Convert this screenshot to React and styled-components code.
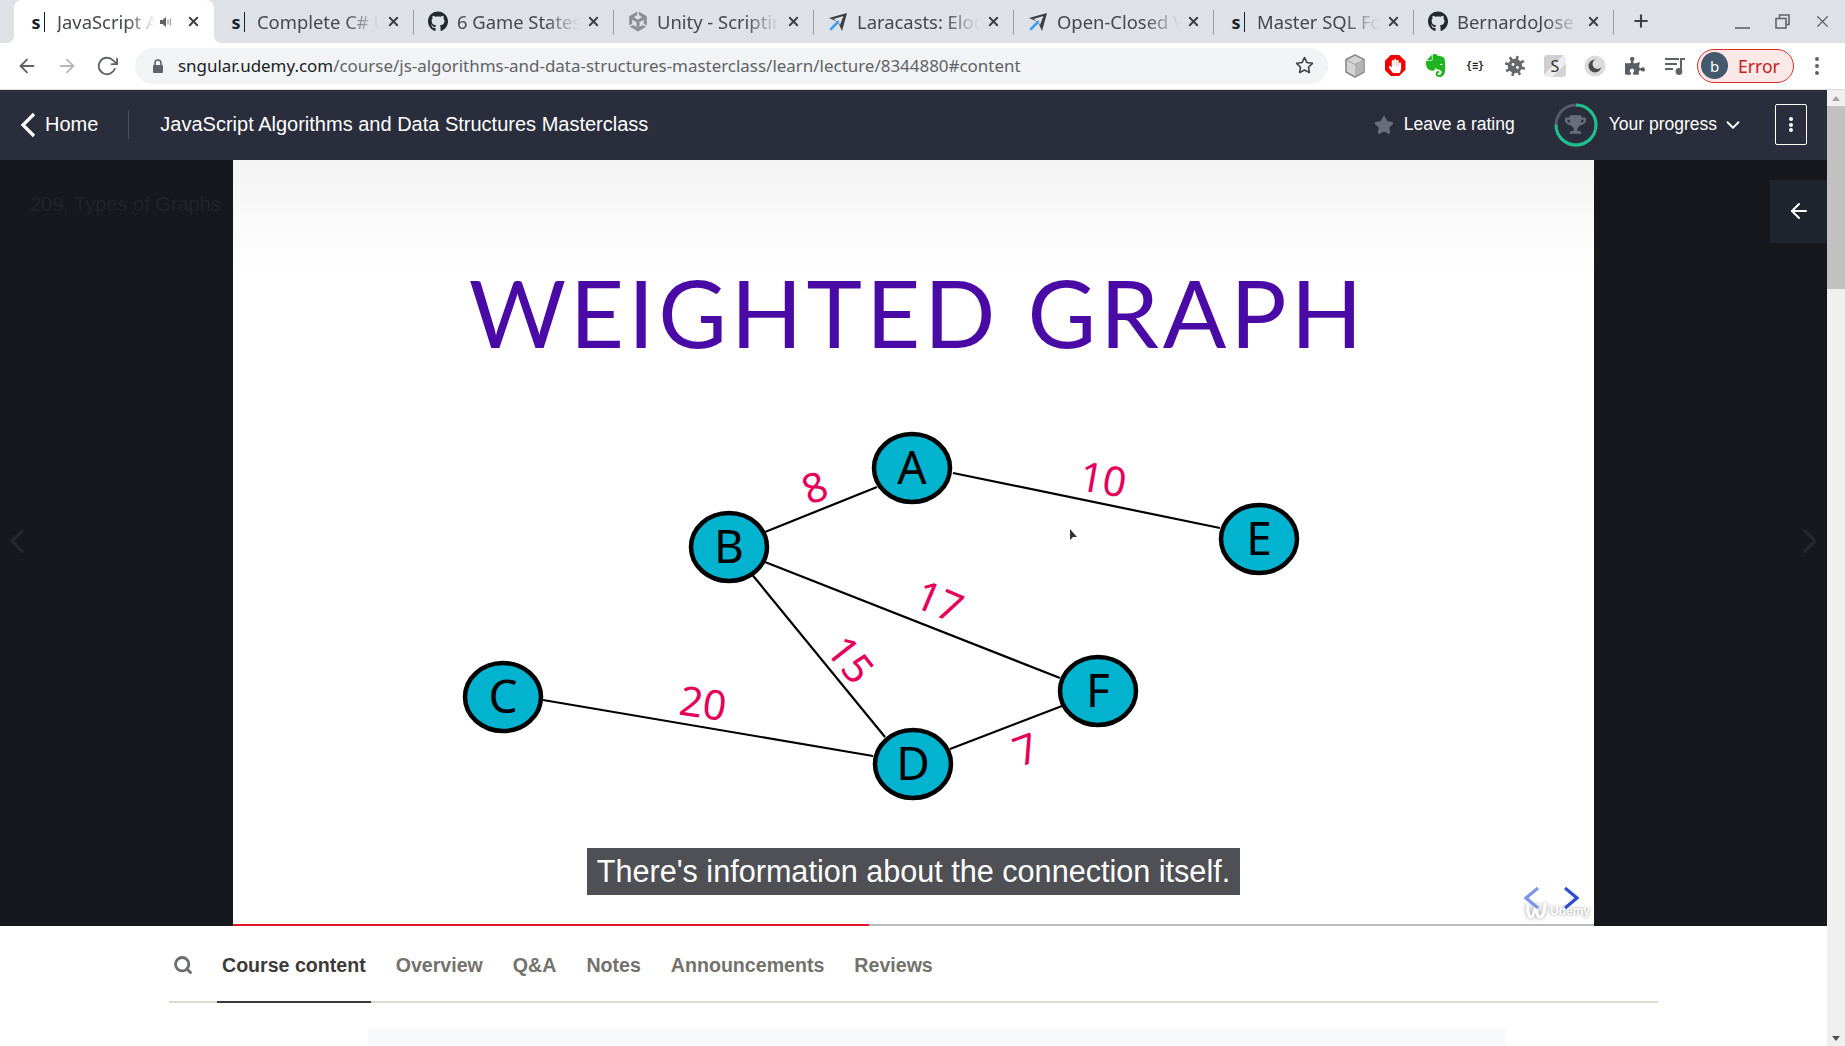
import React from "react";
import styled, { createGlobalStyle } from "styled-components";
import { FaGithub, FaStar, FaTrophy, FaPuzzlePiece, FaHandPaper } from "react-icons/fa";
import { SiUnity, SiEvernote } from "react-icons/si";
import { FiX, FiPlus, FiArrowLeft, FiArrowRight, FiRotateCw, FiStar, FiSearch, FiChevronDown, FiChevronLeft, FiChevronRight } from "react-icons/fi";

const GlobalStyle = createGlobalStyle`
  html, body {
    margin: 0;
    height: 100%;
    overflow: hidden;
    background: #fff;
  }
  #root {
    height: 100%;
  }
`;

const BROWSER_FONT = `"Noto Sans", "Open Sans", sans-serif`;
const PAGE_FONT = `"Liberation Sans", Arial, sans-serif`;

const Shell = styled.div`
  height: 1046px;
  display: flex;
  flex-direction: column;
  overflow: hidden;
`;

const TabStrip = styled.div`
  height: 43px;
  flex: none;
  display: flex;
  padding-left: 14px;
  background: #dee1e6;
  font-family: ${BROWSER_FONT};
`;

const Tab = styled.div`
  position: relative;
  width: 200px;
  flex: none;
  display: flex;
  align-items: center;
  padding: 0 13px 0 14px;
  box-sizing: border-box;
  color: #45484d;
  font-size: 18.4px;
  background: ${(p) => (p.$active ? "#fff" : "transparent")};
  border-radius: 8px 8px 0 0;
  ${(p) =>
    p.$active &&
    `
    &::before, &::after {
      content: "";
      position: absolute;
      bottom: 0;
      width: 8px;
      height: 8px;
    }
    &::before {
      left: -8px;
      background: radial-gradient(circle at 0 0, transparent 8px, #fff 8.5px);
    }
    &::after {
      right: -8px;
      background: radial-gradient(circle at 100% 0, transparent 8px, #fff 8.5px);
    }
  `}
  ${(p) =>
    p.$divider &&
    `
    &::after {
      content: "";
      position: absolute;
      right: 0;
      top: 10px;
      height: 25px;
      width: 1px;
      background: #9b9ea3;
    }
  `}
`;

const Favicon = styled.span`
  width: 20px;
  height: 20px;
  flex: none;
  display: flex;
  align-items: center;
  justify-content: center;
  margin-right: 9px;
  color: #24292e;
  font-size: 21px;
`;

const UdemyMark = styled.span`
  display: flex;
  align-items: center;
  font-size: 18px;
  line-height: 20px;
  font-weight: 700;
  color: #14202c;
  &::after {
    content: "";
    width: 1px;
    height: 20px;
    margin-left: 3px;
    background: #14202c;
  }
`;

const TabTitle = styled.span`
  flex: 1;
  min-width: 0;
  white-space: nowrap;
  overflow: hidden;
  -webkit-mask-image: linear-gradient(to right, #000 72%, transparent 100%);
  mask-image: linear-gradient(to right, #000 72%, transparent 100%);
`;

const TabAudio = styled.svg`
  width: 14px;
  height: 14px;
  flex: none;
  margin: 0 6px 0 4px;
`;

const TabClose = styled(FiX)`
  width: 15px;
  height: 15px;
  flex: none;
  stroke-width: 3;
  color: #3c4043;
  margin-left: 7px;
`;

const NewTab = styled(FiPlus)`
  width: 20px;
  height: 20px;
  margin: 11px 0 0 17px;
  stroke-width: 2.5;
  color: #3c4043;
`;

const WindowControls = styled.div`
  margin-left: auto;
  display: flex;
  align-items: center;
  gap: 21px;
  padding-right: 13px;
  color: #5f6368;
  svg {
    width: 19px;
    height: 19px;
    stroke-width: 1.6;
  }
`;

const Toolbar = styled.div`
  height: 47px;
  flex: none;
  display: flex;
  align-items: center;
  padding: 0 0 1px 16px;
  box-sizing: border-box;
  background: #fff;
  border-bottom: 1px solid #dadce0;
  color: #5f6368;
`;

const NavButton = styled.span`
  width: 22px;
  height: 22px;
  flex: none;
  margin-right: 18px;
  color: ${(p) => (p.$off ? "#b6b8bb" : "#5f6368")};
  svg {
    width: 22px;
    height: 22px;
    display: block;
    stroke-width: 2;
  }
`;

const UrlPill = styled.div`
  width: 1193px;
  height: 36px;
  flex: none;
  margin-left: -1px;
  display: flex;
  align-items: center;
  padding: 0 14px 0 17px;
  box-sizing: border-box;
  border-radius: 18px;
  background: #f1f3f4;
  font-family: ${BROWSER_FONT};
  font-size: 16.95px;
  color: #5f6368;
  svg.lock {
    width: 12px;
    height: 14px;
    margin-right: 14px;
    flex: none;
  }
`;

const UrlHost = styled.span`
  color: #202124;
`;

const UrlStar = styled(FiStar)`
  width: 19px;
  height: 19px;
  margin-left: auto;
  color: #3c4043;
  stroke-width: 2;
`;

const Extensions = styled.div`
  display: flex;
  align-items: center;
  margin-left: 7px;
`;

const ExtSlot = styled.span`
  width: 40px;
  height: 24px;
  flex: none;
  display: flex;
  align-items: center;
  justify-content: center;
  font-family: ${BROWSER_FONT};
`;

const StopBadge = styled.span`
  width: 21px;
  height: 21px;
  display: flex;
  align-items: center;
  justify-content: center;
  background: #f00000;
  color: #fff;
  font-size: 14px;
  clip-path: polygon(30% 0, 70% 0, 100% 30%, 100% 70%, 70% 100%, 30% 100%, 0 70%, 0 30%);
`;

const BraceText = styled.span`
  font-family: "DejaVu Sans Mono", monospace;
  font-size: 10px;
  font-weight: 700;
  color: #222;
`;

const SBadge = styled.span`
  width: 22px;
  height: 22px;
  border-radius: 3px;
  display: flex;
  align-items: center;
  justify-content: center;
  background: linear-gradient(135deg, #cfcfcf 0 45%, #ededed 45% 70%, #d4d4d4 70%);
  font-size: 16px;
  color: #333;
`;

const ProfilePill = styled.div`
  width: 97px;
  height: 34px;
  margin-left: 2px;
  flex: none;
  display: flex;
  align-items: center;
  padding-left: 3px;
  box-sizing: border-box;
  border: 1px solid #d93025;
  border-radius: 17px;
  background: #fce8e6;
  font-family: ${BROWSER_FONT};
  font-size: 17.6px;
  color: #c5221f;
`;

const Avatar = styled.span`
  width: 27px;
  height: 27px;
  border-radius: 50%;
  margin-right: 10px;
  display: flex;
  align-items: center;
  justify-content: center;
  background: #44596b;
  color: #fff;
  font-size: 15px;
`;

const KebabDots = styled.span`
  width: 4px;
  height: 4px;
  margin-left: 21px;
  border-radius: 50%;
  background: #5f6368;
  box-shadow: 0 -7px 0 #5f6368, 0 7px 0 #5f6368;
`;

const Viewport = styled.div`
  flex: 1;
  min-height: 0;
  display: flex;
`;

const Page = styled.div`
  flex: 1;
  min-width: 0;
  display: flex;
  flex-direction: column;
  font-family: ${PAGE_FONT};
`;

const HeaderBar = styled.header`
  height: 70px;
  flex: none;
  display: flex;
  align-items: center;
  padding: 0 20px 1px 20px;
  box-sizing: border-box;
  background: #2a2d3b;
  color: #fff;
  font-size: 20px;
`;

const HomeLink = styled.a`
  display: flex;
  align-items: center;
  gap: 9px;
  padding-right: 30px;
  margin-right: 31px;
  height: 29px;
  border-right: 1px solid #4c4f5b;
`;

const HeaderAction = styled.div`
  display: flex;
  align-items: center;
  font-size: 17.5px;
  margin-left: ${(p) => p.$offset || "0"};
`;

const RatingStar = styled(FaStar)`
  width: 20px;
  height: 20px;
  margin-right: 10px;
  color: #686f7a;
`;

const ProgressRing = styled.span`
  position: relative;
  width: 44px;
  height: 44px;
  margin-right: 11px;
  display: flex;
  align-items: center;
  justify-content: center;
  color: #686f7a;
  svg.ring {
    position: absolute;
    inset: 0;
  }
`;

const ProgressCaret = styled(FiChevronDown)`
  width: 22px;
  height: 22px;
  margin-left: 5px;
`;

const MenuButton = styled.button`
  width: 32px;
  height: 41px;
  margin-left: 31px;
  padding: 0;
  display: flex;
  flex-direction: column;
  align-items: center;
  justify-content: center;
  gap: 1.5px;
  border: 1px solid #fff;
  border-radius: 2px;
  background: transparent;
  span {
    width: 4px;
    height: 4px;
    border-radius: 50%;
    background: #fff;
  }
`;

const Player = styled.section`
  position: relative;
  height: 766px;
  flex: none;
  display: flex;
  justify-content: center;
  background: #16181d;
`;

const LectureTitle = styled.div`
  position: absolute;
  left: 30px;
  top: 33px;
  font-size: 20px;
  color: #222329;
`;

const SideChevron = styled.span`
  position: absolute;
  top: 361px;
  ${(p) => (p.$right ? "right: -3px;" : "left: -3px;")}
  color: #26282e;
  svg {
    width: 40px;
    height: 40px;
    display: block;
  }
`;

const SidebarToggle = styled.button`
  position: absolute;
  right: 0;
  top: 20px;
  width: 57px;
  height: 63px;
  padding: 0 0 2px;
  display: flex;
  align-items: center;
  justify-content: center;
  border: 0;
  background: #20242e;
  color: #fff;
  svg {
    width: 24px;
    height: 24px;
  }
`;

const Slide = styled.div`
  position: relative;
  width: 1361px;
  display: flex;
  flex-direction: column;
  background: linear-gradient(#f3f3f4, #fff 110px);
  overflow: hidden;
`;

const SlideTitle = styled.h1`
  height: 260px;
  margin: 0;
  box-sizing: border-box;
  padding: 87px 0 0 8px;
  text-align: center;
  font-family: Lato, "Open Sans", sans-serif;
  font-weight: 400;
  font-size: 94px;
  letter-spacing: 3.9px;
  line-height: 130px;
  color: #4a0aa5;
  white-space: nowrap;
`;

const GraphCanvas = styled.svg`
  width: 1361px;
  height: 500px;
  flex: none;
  display: block;
  font-family: "Noto Sans", "Open Sans", sans-serif;
`;

const Caption = styled.div`
  position: absolute;
  left: 354px;
  top: 688px;
  width: 653px;
  height: 47px;
  display: flex;
  align-items: center;
  justify-content: center;
  background: #4f5055;
  color: #fff;
  font-size: 30.6px;
  white-space: nowrap;
`;

const SlideArrows = styled.div`
  position: absolute;
  right: 15px;
  bottom: 17px;
  display: flex;
  gap: 25px;
`;

const Watermark = styled.div`
  position: absolute;
  right: 4px;
  bottom: 6px;
  display: flex;
  align-items: center;
  gap: 2px;
  font-size: 12px;
  font-weight: 700;
  color: #fff;
  text-shadow: 0 0 3px #888;
  svg {
    filter: drop-shadow(0 0 2px #999);
  }
`;

const ProgressTrack = styled.div`
  position: absolute;
  left: 0;
  right: 0;
  bottom: 0;
  height: 2px;
  background: #bcbcbc;
`;

const ProgressFill = styled.div`
  height: 100%;
  background: #e0142a;
`;

const TabsBar = styled.nav`
  height: 77px;
  width: 1489px;
  flex: none;
  margin-left: 169px;
  padding-top: 3px;
  display: flex;
  align-items: stretch;
  box-sizing: border-box;
  border-bottom: 2px solid #dcdacb;
`;

const SearchButton = styled.span`
  width: 48px;
  flex: none;
  display: flex;
  align-items: center;
  padding-left: 4px;
  box-sizing: border-box;
  color: #6a6f73;
  svg {
    width: 20px;
    height: 20px;
    stroke-width: 3.4;
  }
`;

const LearnTab = styled.a`
  display: flex;
  align-items: center;
  padding: 0 5px;
  margin: 0 20px -2px 0;
  font-size: 19.6px;
  font-weight: 700;
  color: ${(p) => (p.$active ? "#3c3b37" : "#73726c")};
  border-bottom: 2px solid ${(p) => (p.$active ? "#3c3b37" : "transparent")};
`;

const ContentBox = styled.div`
  flex: 1;
  width: 1137px;
  margin: 25px 0 0 368px;
  background: #f7f8fa;
`;

const Scrollbar = styled.div`
  width: 18px;
  flex: none;
  display: flex;
  flex-direction: column;
  align-items: center;
  background: #f0f0f0;
`;

const ScrollArrow = styled.span`
  height: 16px;
  flex: none;
  display: flex;
  align-items: center;
  justify-content: center;
  margin-top: ${(p) => (p.$down ? "auto" : "0")};
  &::before {
    content: "";
    border-left: 4.5px solid transparent;
    border-right: 4.5px solid transparent;
    ${(p) =>
      p.$down
        ? "border-top: 5px solid #505050;"
        : "border-bottom: 5px solid #a3a3a3;"}
  }
`;

const ScrollThumb = styled.div`
  width: 100%;
  height: 183px;
  background: #c1c1c1;
`;

const PlaneIcon = () => (
  <svg width="20" height="20" viewBox="0 0 20 20">
    <path d="M1 6 L19 1 L14 19 L10 10 Z" fill="#3a3d42" />
    <path d="M5.5 7 L15.5 4 L12 13 L10 10 Z" fill="#fff" opacity="0.85" />
    <path d="M10 10 L3 17" stroke="#3ca0f0" strokeWidth="2.6" strokeLinecap="round" />
  </svg>
);

const CubeIcon = () => (
  <svg width="22" height="24" viewBox="0 0 22 24">
    <path d="M11 1 L20 5.5 V18 L11 23 L2 18 V5.5 Z" fill="#d4d4d4" stroke="#8a8a8a" strokeWidth="1.6" />
    <path d="M11 10.5 L19.5 6 V17.5 L11 22.5 Z" fill="#b4b4b4" />
    <path d="M2.5 6 L11 10.5 L19.5 6" fill="none" stroke="#a0a0a0" strokeWidth="1" />
  </svg>
);

const GearBugIcon = () => (
  <svg width="22" height="22" viewBox="0 0 22 22">
    <circle cx="11" cy="11" r="7.2" fill="#66686c" />
    {[0, 45, 90, 135, 180, 225, 270, 315].map((a) => (
      <rect key={a} x="9.7" y="0.8" width="2.6" height="5" fill="#66686c" transform={`rotate(${a + 15} 11 11)`} />
    ))}
    <circle cx="9" cy="9.5" r="1.4" fill="#fff" />
    <circle cx="13.5" cy="12.5" r="1.4" fill="#fff" />
  </svg>
);

const MoonIcon = () => (
  <svg width="22" height="22" viewBox="0 0 22 22">
    <circle cx="11" cy="11" r="10.5" fill="#dcdcdc" />
    <circle cx="11" cy="11" r="6.5" fill="#4a4a4a" />
    <circle cx="13.5" cy="9" r="5" fill="#dcdcdc" />
  </svg>
);

const MediaIcon = () => (
  <svg width="22" height="20" viewBox="0 0 22 20" fill="none" stroke="#5f6368" strokeWidth="2">
    <path d="M1 3 H15 M1 8 H13 M1 13 H9" />
    <path d="M17 15 V3 H21" />
    <circle cx="15" cy="15.5" r="2.4" fill="#5f6368" />
  </svg>
);

const AudioGlyph = () => (
  <TabAudio viewBox="0 0 14 14">
    <path d="M1 5 H3.5 L7 2 V12 L3.5 9 H1 Z" fill="#5f6368" />
    <path d="M9 4.5 V9.5 M11.5 3.5 V10.5" stroke="#9a9da1" strokeWidth="1.2" />
  </TabAudio>
);

const SlideChevron = ({ dir, color }) => (
  <svg width="15" height="22" viewBox="0 0 15 22" fill="none" stroke={color} strokeWidth="3.2">
    <path d={dir === "left" ? "M14 1 L2 11 L14 21" : "M1 1 L13 11 L1 21"} />
  </svg>
);

const tabs = [
  { title: "JavaScript A", icon: <UdemyMark>s</UdemyMark>, active: true, audio: true },
  { title: "Complete C# U", icon: <UdemyMark>s</UdemyMark>, divider: true },
  { title: "6 Game States", icon: <FaGithub />, divider: true },
  { title: "Unity - Scriptin", icon: <SiUnity color="#8d8f92" />, divider: true },
  { title: "Laracasts: Eloc", icon: <PlaneIcon />, divider: true },
  { title: "Open-Closed V", icon: <PlaneIcon />, divider: true },
  { title: "Master SQL Fo", icon: <UdemyMark>s</UdemyMark>, divider: true },
  { title: "BernardoJose", icon: <FaGithub />, divider: true },
];

const nodes = [
  { id: "A", x: 912, y: 468 },
  { id: "B", x: 729, y: 547 },
  { id: "C", x: 503, y: 697 },
  { id: "D", x: 913, y: 764 },
  { id: "E", x: 1259, y: 539 },
  { id: "F", x: 1098, y: 691 },
];

const edges = [
  [877, 487, 765, 532],
  [765, 562, 1060, 678],
  [750, 572, 885, 737],
  [543, 700, 873, 756],
  [953, 473, 1220, 528],
  [950, 749, 1062, 706],
];

const weights = [
  { text: "8", x: 815, y: 488, r: -22 },
  { text: "10", x: 1103, y: 480, r: 10 },
  { text: "17", x: 939, y: 602, r: 23 },
  { text: "15", x: 850, y: 660, r: 52 },
  { text: "20", x: 703, y: 704, r: 8 },
  { text: "7", x: 1026, y: 750, r: -20 },
];

const learnTabs = ["Course content", "Overview", "Q&A", "Notes", "Announcements", "Reviews"];

const App = () => {
  return (
    <Shell>
      <GlobalStyle />
      <TabStrip>
        {tabs.map((tab) => (
          <Tab key={tab.title} $active={tab.active} $divider={tab.divider}>
            <Favicon>{tab.icon}</Favicon>
            <TabTitle>{tab.title}</TabTitle>
            {tab.audio && <AudioGlyph />}
            <TabClose />
          </Tab>
        ))}
        <NewTab />
        <WindowControls>
          <svg viewBox="0 0 19 19" fill="none" stroke="currentColor" strokeWidth="2">
            <path d="M2 16 H17" />
          </svg>
          <svg viewBox="0 0 19 19" fill="none" stroke="currentColor">
            <path d="M3 6.5 H13 V16 H3 Z M6.5 6 V3 H16 V12.5 H13.5" />
          </svg>
          <FiX />
        </WindowControls>
      </TabStrip>
      <Toolbar>
        <NavButton>
          <FiArrowLeft />
        </NavButton>
        <NavButton $off>
          <FiArrowRight />
        </NavButton>
        <NavButton>
          <FiRotateCw />
        </NavButton>
        <UrlPill>
          <svg className="lock" viewBox="0 0 12 14">
            <path d="M3 6 V4 a3 3 0 0 1 6 0 V6" fill="none" stroke="#5f6368" strokeWidth="1.6" />
            <rect x="1" y="6" width="10" height="8" rx="1" fill="#5f6368" />
          </svg>
          <UrlHost>sngular.udemy.com</UrlHost>
          /course/js-algorithms-and-data-structures-masterclass/learn/lecture/8344880#content
          <UrlStar />
        </UrlPill>
        <Extensions>
          <ExtSlot>
            <CubeIcon />
          </ExtSlot>
          <ExtSlot>
            <StopBadge>
              <FaHandPaper />
            </StopBadge>
          </ExtSlot>
          <ExtSlot>
            <SiEvernote size={23} color="#1fb320" />
          </ExtSlot>
          <ExtSlot>
            <BraceText>{"{≡}"}</BraceText>
          </ExtSlot>
          <ExtSlot>
            <GearBugIcon />
          </ExtSlot>
          <ExtSlot>
            <SBadge>S</SBadge>
          </ExtSlot>
          <ExtSlot>
            <MoonIcon />
          </ExtSlot>
          <ExtSlot>
            <FaPuzzlePiece size={20} color="#5a5e66" />
          </ExtSlot>
          <ExtSlot>
            <MediaIcon />
          </ExtSlot>
        </Extensions>
        <ProfilePill>
          <Avatar>b</Avatar>
          Error
        </ProfilePill>
        <KebabDots />
      </Toolbar>
      <Viewport>
        <Page>
          <HeaderBar>
            <HomeLink>
              <svg width="16" height="26" viewBox="0 0 16 26" fill="none" stroke="#fff" strokeWidth="3.2">
                <path d="M14 2 L3 13 L14 24" />
              </svg>
              Home
            </HomeLink>
            JavaScript Algorithms and Data Structures Masterclass
            <HeaderAction $offset="auto">
              <RatingStar />
              Leave a rating
            </HeaderAction>
            <HeaderAction $offset="39px">
              <ProgressRing>
                <svg className="ring" width="44" height="44" viewBox="0 0 44 44" fill="none" strokeWidth="3">
                  <circle cx="22" cy="22" r="20" stroke="#565a68" />
                  <circle
                    cx="22"
                    cy="22"
                    r="20"
                    stroke="#1cc08a"
                    strokeDasharray="94 126"
                    transform="rotate(-90 22 22)"
                  />
                </svg>
                <FaTrophy size={21} />
              </ProgressRing>
              Your progress
              <ProgressCaret />
            </HeaderAction>
            <MenuButton>
              <span />
              <span />
              <span />
            </MenuButton>
          </HeaderBar>
          <Player>
            <LectureTitle>209. Types of Graphs</LectureTitle>
            <SideChevron>
              <FiChevronLeft />
            </SideChevron>
            <SideChevron $right>
              <FiChevronRight />
            </SideChevron>
            <Slide>
              <SlideTitle>WEIGHTED GRAPH</SlideTitle>
              <GraphCanvas viewBox="233 420 1361 500">
                {edges.map(([x1, y1, x2, y2]) => (
                  <line key={`${x1}-${y1}`} x1={x1} y1={y1} x2={x2} y2={y2} stroke="#000" strokeWidth="2.2" />
                ))}
                {nodes.map((n) => (
                  <g key={n.id}>
                    <ellipse cx={n.x} cy={n.y} rx="38" ry="34" fill="#02b3d0" stroke="#000" strokeWidth="4.5" />
                    <text x={n.x} y={n.y + 16} fontSize="46" textAnchor="middle" fill="#000">
                      {n.id}
                    </text>
                  </g>
                ))}
                {weights.map((w) => (
                  <text
                    key={w.text}
                    x={w.x}
                    y={w.y + 14}
                    fontSize="41"
                    textAnchor="middle"
                    fill="#e6005c"
                    transform={`rotate(${w.r} ${w.x} ${w.y})`}
                  >
                    {w.text}
                  </text>
                ))}
                <path d="M1070 529 l0 11 l3 -3 l4 0 Z" fill="#333" />
              </GraphCanvas>
              <Caption>There's information about the connection itself.</Caption>
              <Watermark>
                <svg width="22" height="18" viewBox="0 0 22 18" fill="none" stroke="#fff" strokeWidth="3" strokeLinecap="round">
                  <path d="M2 3 C1 9 3 15 5 15 C8 15 9 6 10 2 C10 8 11 15 14 15 C17 15 19 8 19 2" />
                </svg>
                Udemy
              </Watermark>
              <SlideArrows>
                <SlideChevron dir="left" color="#7d96e6" />
                <SlideChevron dir="right" color="#2f4bd0" />
              </SlideArrows>
              <ProgressTrack>
                <ProgressFill style={{ width: `${(636 / 1361) * 100}%` }} />
              </ProgressTrack>
            </Slide>
            <SidebarToggle>
              <FiArrowLeft />
            </SidebarToggle>
          </Player>
          <TabsBar>
            <SearchButton>
              <FiSearch />
            </SearchButton>
            {learnTabs.map((label, i) => (
              <LearnTab key={label} $active={i === 0}>
                {label}
              </LearnTab>
            ))}
          </TabsBar>
          <ContentBox />
        </Page>
        <Scrollbar>
          <ScrollArrow />
          <ScrollThumb />
          <ScrollArrow $down />
        </Scrollbar>
      </Viewport>
    </Shell>
  );
};

export default App;
